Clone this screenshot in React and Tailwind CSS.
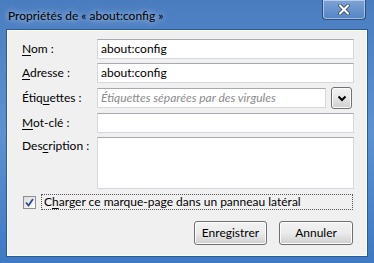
import React from "react";

const font = { fontFamily: 'Lato, "Noto Sans", sans-serif' };

const Label = ({ before, ul, after }) => (
  <span className="text-[12px] text-black leading-none whitespace-nowrap">
    {before}
    <span className="underline underline-offset-2">{ul}</span>
    {after}
  </span>
);

const Field = ({ value, placeholder, className = "" }) => (
  <div
    className={`h-[20px] bg-white border border-[#d5d8dd] border-t-[#a6a9ae] flex items-center px-[3px] text-[12px] ${className}`}
  >
    {value ? (
      <span className="text-black">{value}</span>
    ) : (
      <span className="text-[#8b8b8b] italic">{placeholder}</span>
    )}
  </div>
);

const Button = ({ children, w }) => (
  <button
    className={`${w} h-[24px] rounded-[3px] border border-[#707070] text-[12px] text-black bg-gradient-to-b from-[#f2f2f2] via-[#ebebeb] to-[#cfcfcf] shadow-[inset_0_0_0_1px_#fcfcfc]`}
  >
    {children}
  </button>
);

export default function App() {
  return (
    <div
      style={font}
      className="w-[374px] h-[263px] flex flex-col bg-gradient-to-b from-[#4a7cc0] via-[#5d91d2] to-[#3f78c4] overflow-hidden"
    >
      {/* title bar */}
      <div className="h-[30px] flex items-start justify-between pl-[8px] pr-[8px]">
        <span className="text-[12px] text-black mt-[7px] [text-shadow:0_0_6px_rgba(255,255,255,0.9)]">
          Propriétés de « about:config »
        </span>
        <div className="w-[44px] h-[20px] rounded-b-[4px] border border-t-0 border-[#2c4f7e] shadow-[inset_0_0_0_1px_rgba(255,255,255,0.45)] bg-gradient-to-b from-[#9fbde4]/60 to-[#5e8dcb]/40 flex items-center justify-center">
          <svg width="12" height="11" viewBox="0 0 12 11">
            <path d="M2 1.5 L10 9.5 M10 1.5 L2 9.5" stroke="#2b3f5c" strokeWidth="3.6" strokeLinecap="round" />
            <path d="M2 1.5 L10 9.5 M10 1.5 L2 9.5" stroke="#ffffff" strokeWidth="2.2" strokeLinecap="round" />
          </svg>
        </div>
      </div>

      {/* content panel */}
      <div className="mx-[7px] h-[226px] border border-[#ffffff]/80 outline outline-1 outline-[#2a5a9a] bg-[#f0f0f0] pt-[8px] pl-[14px] pr-[12px] flex flex-col">
        <div className="grid grid-cols-[75px_1fr] gap-y-[4px] items-center">
          <Label ul="N" after="om :" />
          <Field value="about:config" />
          <Label ul="A" after="dresse :" />
          <Field value="about:config" />
          <Label before="Étiq" ul="u" after="ettes :" />
          <div className="flex items-center gap-[5px]">
            <Field placeholder="Étiquettes séparées par des virgules" className="flex-1" />
            <div className="w-[21px] h-[22px] rounded-[3px] border border-[#707070] bg-gradient-to-b from-[#f2f2f2] via-[#e6e6e6] to-[#cfcfcf] shadow-[inset_0_0_0_1px_#fbfbfb] flex items-center justify-center mr-[2px]">
              <svg width="10" height="7" viewBox="0 0 10 7">
                <path d="M1.5 1.5 L5 5 L8.5 1.5" stroke="#000" strokeWidth="2" fill="none" />
              </svg>
            </div>
          </div>
          <Label ul="M" after="ot-clé :" />
          <Field value="" />
          <div className="self-start pt-[3px] text-[12px] leading-none">
            <Label before="Des" ul="c" after="ription :" />
          </div>
          <div className="h-[52px] bg-white border border-[#d5d8dd] border-t-[#a6a9ae]" />
        </div>

        <div className="flex items-center mt-[5px] pl-[1px]">
          <div className="w-[13px] h-[13px] border border-[#8e8f8f] bg-gradient-to-br from-[#dcdcdc] to-[#ffffff] flex items-center justify-center">
            <svg width="9" height="9" viewBox="0 0 9 9">
              <path d="M1 4.5 L3.5 7.5 L8 1" stroke="#2c4d9c" strokeWidth="1.8" fill="none" />
            </svg>
          </div>
          <div className="ml-[5px] flex-1 h-[16px] border border-dotted border-[#555] flex items-center pl-[2px] mr-[1px]">
            <Label before="C" ul="h" after="arger ce marque-page dans un panneau latéral" />
          </div>
        </div>

        <div className="flex justify-end gap-[12px] mt-[11px] pr-[1px]">
          <Button w="w-[73px]">Enregistrer</Button>
          <Button w="w-[74px]">Annuler</Button>
        </div>
      </div>
    </div>
  );
}
